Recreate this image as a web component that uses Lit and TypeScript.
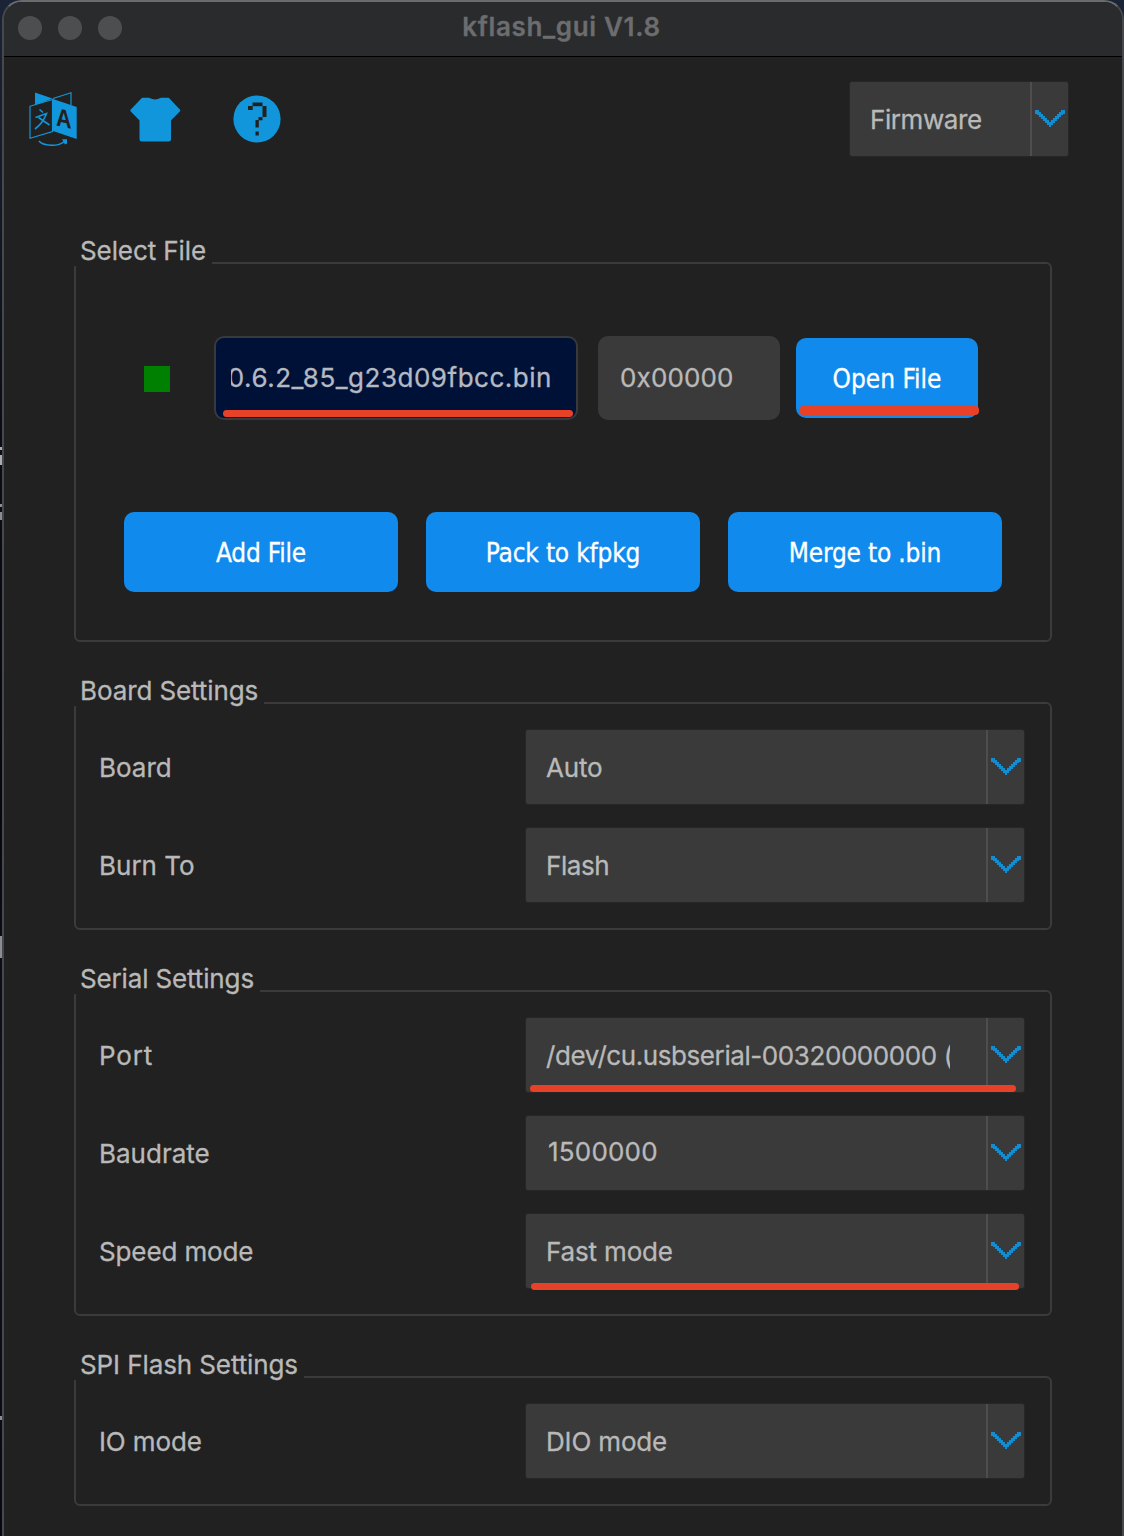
import { LitElement, html, css, svg, nothing } from "lit";
import { customElement, property } from "lit/decorators.js";
import { classMap } from "lit/directives/class-map.js";

interface Row {
  label: string;
  value: string;
  labelTrack?: string;
  valueTrack?: string;
  mark?: string;
  editable?: boolean;
}

interface Group {
  title: string;
  size: string;
  rows: Row[];
}

const GROUPS: Group[] = [
  {
    title: "Board Settings",
    size: "board",
    rows: [
      { label: "Board", value: "Auto", valueTrack: "tight" },
      { label: "Burn To", value: "Flash", valueTrack: "tighter" },
    ],
  },
  {
    title: "Serial Settings",
    size: "serial",
    rows: [
      { label: "Port", value: "/dev/cu.usbserial-00320000000 (", labelTrack: "widest", valueTrack: "tighter", mark: "port" },
      { label: "Baudrate", value: "1500000", valueTrack: "wide", editable: true },
      { label: "Speed mode", value: "Fast mode", labelTrack: "tight", valueTrack: "tight", mark: "speed" },
    ],
  },
  {
    title: "SPI Flash Settings",
    size: "spi",
    rows: [{ label: "IO mode", value: "DIO mode", labelTrack: "tight", valueTrack: "tight" }],
  },
];

/** Drop-down box with a separate arrow compartment. */
@customElement("combo-box")
class ComboBox extends LitElement {
  @property() value = "";
  @property() track = "";
  @property() mark = "";
  @property({ type: Boolean }) editable = false;

  static styles = css`
    :host { display: block; position: relative; }
    .box {
      display: flex;
      box-sizing: border-box;
      height: 74px;
      background: #3a3a3a;
      border-radius: 2px;
      box-shadow: 0 0 0 1px #272727;
    }
    .text {
      flex: 1;
      min-width: 0;
      margin: 0 36px 0 20px;
      line-height: 76px;
      white-space: pre;
      overflow: hidden;
      height: 74px;
    }
    .text.editable { margin-left: 22px; line-height: 72px; }
    .wide { letter-spacing: 0.2px; }
    .tight { letter-spacing: -0.16px; }
    .tighter { letter-spacing: -0.42px; }
    .arrow {
      flex: none;
      width: 36px;
      border-left: 2px solid #504d4c;
      display: flex;
      justify-content: center;
      padding-top: 28px;
      box-sizing: content-box;
      height: 46px;
    }
    .arrow svg { display: block; width: 30px; height: 18px; }
    .mark {
      position: absolute;
      height: 7px;
      border-radius: 4px;
      background: #e74127;
    }
    .mark.port { left: 4px; top: 67px; width: 486px; }
    .mark.speed { left: 5px; top: 69px; width: 488px; }
  `;

  render() {
    const steps = Array.from({ length: 15 }, (_, i) => {
      const row = i < 8 ? i : 14 - i;
      return svg`<rect x=${i * 2} y=${row * 2 - (row === 0 ? 0 : 2)} width="2" height=${row === 0 ? 4 : 5}></rect>`;
    });
    return html`
      <div class="box">
        <div class=${classMap({ text: true, editable: this.editable, [this.track || "normal"]: true })}>${this.value}</div>
        <div class="arrow">
          <svg viewBox="0 0 30 18" fill="#158cd0">${steps}</svg>
        </div>
      </div>
      ${this.mark ? html`<div class="mark ${this.mark}"></div>` : nothing}
    `;
  }
}

@customElement("app-root")
class AppRoot extends LitElement {
  static styles = css`
    :host {
      display: block;
      height: 1536px;
      overflow: hidden;
      font: 26px/30px Inter, "Liberation Sans", sans-serif;
      -webkit-text-stroke: 0.3px;
      color: #b9b9b9;
      background:
        linear-gradient(#a9abad, #a9abad) 0 447px / 2px 3px no-repeat,
        linear-gradient(#a9abad, #a9abad) 0 455px / 2px 10px no-repeat,
        linear-gradient(#8b8d90, #8b8d90) 0 504px / 2px 3px no-repeat,
        linear-gradient(#8b8d90, #8b8d90) 0 512px / 2px 8px no-repeat,
        linear-gradient(#8b8d90, #8b8d90) 0 936px / 2px 22px no-repeat,
        linear-gradient(#8b8d90, #8b8d90) 0 1416px / 2px 4px no-repeat,
        linear-gradient(#1b2436, #0b0d14 420px, #05070d 800px, #10131b 1100px, #070911);
    }
    .window {
      box-sizing: border-box;
      height: 1560px;
      margin-left: 2px;
      border: 2px solid #46484b;
      border-top-color: #6a6b6d;
      border-radius: 20px 20px 0 0;
      background: #212121;
      overflow: hidden;
    }
    .titlebar {
      display: grid;
      grid-template-columns: 1fr auto 1fr;
      align-items: center;
      height: 55px;
      padding: 0 14px;
      background: #2a2b2d;
      border-bottom: 1px solid #000;
      box-sizing: border-box;
    }
    .lights { display: flex; gap: 16px; margin-bottom: 2px; }
    .light { width: 24px; height: 24px; border-radius: 50%; background: #4d4e50; }
    .title {
      font-weight: 600;
      letter-spacing: 0.65px;
      color: #6c6d6f;
      margin: 0 3px 4px 0;
    }
    .toolbar {
      display: flex;
      align-items: flex-start;
      height: 179px;
      padding: 25px 54px 0 24px;
      box-sizing: border-box;
    }
    .toolbar svg { display: block; height: 56px; margin-top: 8px; }
    .translate { width: 50px; }
    .shirt { width: 52px; margin-left: 51px; }
    .help { width: 50px; margin-left: 51px; }
    .firmware { width: 218px; margin-left: auto; }
    .groups { padding: 0 70px; }
    .group {
      margin-top: 60px;
      box-sizing: border-box;
      border: 2px solid #3b3b3b;
      border-radius: 6px;
      width: 978px;
    }
    .group.files { margin-top: 26px; height: 380px; }
    .group.board { height: 228px; }
    .group.serial { height: 326px; }
    .group.spi { height: 130px; }
    .legend {
      box-sizing: border-box;
      height: 30px;
      margin: -28px 0 0 -2px;
      padding-left: 6px;
      background: #212121;
      white-space: nowrap;
      letter-spacing: -0.1px;
    }
    .files .legend { width: 138px; }
    .board .legend { width: 190px; }
    .serial .legend { width: 186px; letter-spacing: -0.14px; }
    .spi .legend { width: 230px; }
    .rows {
      display: flex;
      flex-direction: column;
      gap: 24px;
      padding: 24px 26px 0 23px;
    }
    .row { display: flex; justify-content: space-between; height: 74px; }
    .label { line-height: 76px; }
    .label.widest { letter-spacing: 0.8px; }
    .label.tight { letter-spacing: -0.12px; }
    .row combo-box { width: 498px; }
    .entry {
      display: flex;
      align-items: center;
      height: 84px;
      padding: 70px 0 0 68px;
    }
    .check { width: 26px; height: 26px; background: #008000; margin: 2px 44px 0 0; }
    .path, .open { position: relative; }
    .path {
      box-sizing: border-box;
      width: 364px;
      height: 84px;
      padding: 0 24px 0 15px;
      border: 2px solid #37393d;
      border-radius: 10px;
      background: #001138;
      color: #b5b9c2;
    }
    .scroll {
      display: flex;
      justify-content: flex-end;
      overflow: hidden;
      height: 80px;
      line-height: 80px;
      letter-spacing: 0.52px;
      white-space: nowrap;
    }
    .offset {
      box-sizing: border-box;
      width: 182px;
      height: 84px;
      margin: 0 16px 0 20px;
      padding-left: 22px;
      border-radius: 10px;
      background: #3a3a3a;
      line-height: 84px;
      letter-spacing: 0.15px;
    }
    .button {
      height: 80px;
      border-radius: 10px;
      background: #118aee;
      color: #fff;
      font-family: "DejaVu Sans Condensed", "DejaVu Sans", sans-serif;
      font-stretch: condensed;
      line-height: 82px;
      text-align: center;
      letter-spacing: -0.2px;
    }
    .open { width: 182px; letter-spacing: 0; }
    .mark {
      position: absolute;
      border-radius: 4px;
      background: #e74127;
    }
    .path .mark { left: 7px; top: 72px; width: 350px; height: 7px; }
    .open .mark { left: 3px; top: 68px; width: 180px; height: 9px; }
    .actions {
      display: grid;
      grid-template-columns: repeat(3, 274px);
      gap: 28px;
      padding: 92px 0 0 48px;
    }
    .icon-letter { font: bold 27px "Liberation Sans", sans-serif; }
  `;

  render() {
    return html`
      <div class="window">
        <header class="titlebar">
          <div class="lights">
            <span class="light"></span><span class="light"></span><span class="light"></span>
          </div>
          <div class="title">kflash_gui V1.8</div>
        </header>

        <nav class="toolbar">
          <svg class="translate" viewBox="28 90 50 56" fill="none" stroke="#1296db" stroke-width="1.2">
            <path d="M35 92.5 52.5 98.5 35 105Z" fill="#1296db" stroke="none"></path>
            <path d="M53 98.5 71 92.7V105"></path>
            <path d="M30 106.3 52.5 99.5V131.5L30 138.3Z" fill="#212121"></path>
            <path d="M53 99 76.7 107V139L53 131Z" fill="#1296db" stroke="none"></path>
            <path d="M39.5 109.5 43 112.5M35.5 117.5 46.5 113.5Q43 123 35 129M38.5 117.5 49.5 125" stroke-width="1.6"></path>
            <text class="icon-letter" fill="#212121" stroke="none" transform="translate(56 125.5) skewY(12) scale(.8 .95)">A</text>
            <path d="M39 141Q42 145 52 145.3Q60 145.3 64.5 141.5" stroke-width="1.5"></path>
            <path d="M62 139.2H67V143.5L65 144.5Z" fill="#1296db" stroke="none"></path>
          </svg>
          <svg class="shirt" viewBox="129 90 52 56">
            <path fill="#1296db" stroke="#1296db" stroke-width="2" stroke-linejoin="round"
              d="M142.5 98.8H149Q155 102 161 98.8H168.3L179.3 110.5 170 120V139Q170 140.5 168.5 140.5H142Q140.5 140.5 140.5 139V120L131.3 110.5Z"></path>
          </svg>
          <svg class="help" viewBox="232 90 50 56">
            <circle cx="257" cy="119" r="23.6" fill="#1296db"></circle>
            <g fill="#212121">
              <rect x="252.5" y="102.5" width="10" height="3.7"></rect>
              <rect x="248" y="106" width="4.7" height="4"></rect>
              <rect x="262.5" y="106" width="4" height="11"></rect>
              <rect x="258.5" y="117" width="4" height="3.3"></rect>
              <rect x="255.5" y="120" width="3.3" height="7.5"></rect>
              <rect x="255.5" y="131.5" width="3.3" height="4"></rect>
            </g>
          </svg>
          <combo-box class="firmware" value="Firmware" track="tighter"></combo-box>
        </nav>

        <main class="groups">
          <section class="group files">
            <div class="legend">Select File</div>
            <div class="entry">
              <span class="check"></span>
              <div class="path">
                <div class="scroll"><span>0.6.2_85_g23d09fbcc.bin</span></div>
                <div class="mark"></div>
              </div>
              <div class="offset">0x00000</div>
              <div class="button open">Open File<div class="mark"></div></div>
            </div>
            <div class="actions">
              <div class="button">Add File</div>
              <div class="button">Pack to kfpkg</div>
              <div class="button">Merge to .bin</div>
            </div>
          </section>

          ${GROUPS.map(
            (g) => html`
              <section class="group ${g.size}">
                <div class="legend">${g.title}</div>
                <div class="rows">
                  ${g.rows.map(
                    (r) => html`
                      <div class="row">
                        <div class="label ${r.labelTrack ?? ""}">${r.label}</div>
                        <combo-box
                          .value=${r.value}
                          .track=${r.valueTrack ?? ""}
                          .mark=${r.mark ?? ""}
                          .editable=${r.editable ?? false}
                        ></combo-box>
                      </div>
                    `
                  )}
                </div>
              </section>
            `
          )}
        </main>
      </div>
    `;
  }
}
